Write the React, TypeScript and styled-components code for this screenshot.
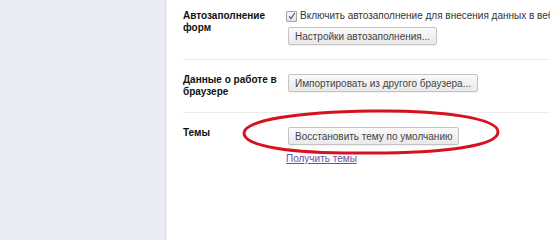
import React from 'react';
import styled, { createGlobalStyle } from 'styled-components';

const GlobalStyle = createGlobalStyle`
  html, body {
    margin: 0;
    padding: 0;
    background: #fff;
  }
  body {
    font-family: "Liberation Sans", Arial, sans-serif;
    font-size: 10px;
    color: #333;
  }
`;

const Page = styled.div`
  display: flex;
  width: 550px;
  height: 240px;
  overflow: hidden;
`;

const Sidebar = styled.div`
  width: 165px;
  flex: none;
  background: #e9edf3;
  border-right: 1px solid #d7dce4;
  box-shadow: 1px 0 0 #f3f5f8;
`;

const Main = styled.div`
  position: relative;
  flex: 1;
  padding-left: 17px;
`;

const Section = styled.div<{ $padTop?: number; $padBottom?: number; $last?: boolean }>`
  display: grid;
  grid-template-columns: 103px 1fr;
  padding: ${(p) => p.$padTop ?? 14}px 0 ${(p) => p.$padBottom ?? 14}px;
  border-bottom: ${(p) => (p.$last ? 'none' : '1px solid #ececec')};
`;

const Label = styled.div`
  font-weight: bold;
  font-size: 10px;
  line-height: 12px;
  color: #111;
`;

const Controls = styled.div`
  display: flex;
  flex-direction: column;
  align-items: flex-start;
  gap: 5px;
  white-space: nowrap;
`;

const CheckRow = styled.label`
  display: flex;
  align-items: center;
  gap: 3px;
  line-height: 12px;
  color: #333;
`;

const Box = styled.span`
  width: 9px;
  height: 9px;
  border: 1px solid #9aa6b6;
  border-radius: 1px;
  background: linear-gradient(#f4f6f9, #dfe4ea);
  display: flex;
  align-items: center;
  justify-content: center;
`;

const Button = styled.button`
  margin-left: 2px;
  height: 18px;
  padding: 0 6px;
  font-family: inherit;
  font-size: 10px;
  color: #444;
  background: linear-gradient(#fafafa, #e9e9e9);
  border: 1px solid #c4c4c4;
  border-radius: 2px;
  box-shadow: 0 1px 0 rgba(0, 0, 0, 0.06);
`;

const Link = styled.a`
  color: #6b4fa6;
  text-decoration: underline;
  line-height: 12px;
  margin-top: 3px;
`;

const Mark = styled.svg`
  position: absolute;
  left: 60px;
  top: 106px;
  pointer-events: none;
`;

export default function App() {
  return (
    <>
      <GlobalStyle />
      <Page>
        <Sidebar />
        <Main>
          <Section $padTop={10} $padBottom={14}>
            <Label>
              Автозаполнение
              <br />
              форм
            </Label>
            <Controls>
              <CheckRow>
                <Box>
                  <svg width="8" height="8" viewBox="0 0 8 8">
                    <path d="M1.2 4.4 L3 6.6 L6.8 1" fill="none" stroke="#4a5a74" strokeWidth="1.2" />
                  </svg>
                </Box>
                Включить автозаполнение для внесения данных в веб-формы одним кликом
              </CheckRow>
              <Button>Настройки автозаполнения...</Button>
            </Controls>
          </Section>
          <Section>
            <Label>
              Данные о работе в
              <br />
              браузере
            </Label>
            <Controls>
              <Button>Импортировать из другого браузера...</Button>
            </Controls>
          </Section>
          <Section $last>
            <Label>Темы</Label>
            <Controls>
              <Button>Восстановить тему по умолчанию</Button>
              <Link href="#">Получить темы</Link>
            </Controls>
          </Section>
          <Mark width="280" height="52" viewBox="0 0 280 52">
            <path
              d="M145 5 C 215 4, 272 12, 272 26 C 272 40, 218 47, 145 47 C 62 48, 18 40, 18 27 C 19 14, 72 6, 145 5 Z"
              fill="none"
              stroke="#d5121e"
              strokeWidth="3"
            />
          </Mark>
        </Main>
      </Page>
    </>
  );
}
